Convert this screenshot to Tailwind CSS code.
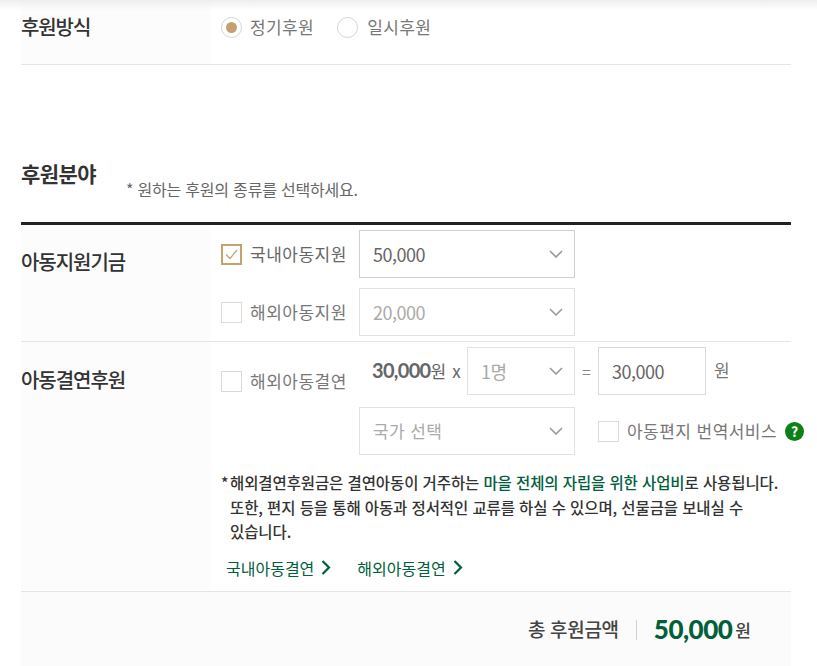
<!DOCTYPE html>
<html lang="ko">
<head>
  <meta charset="UTF-8"/>
  <title>후원분야</title>
  <script src="https://cdn.jsdelivr.net/npm/@tailwindcss/browser@4"></script>
</head>
<body class="bg-white text-[#333] h-[666px] overflow-hidden relative font-['Noto_Sans_CJK_KR','Noto_Sans',sans-serif]">

  <!-- top shadow -->
  <div class="absolute top-0 left-0 right-0 h-[10px] bg-gradient-to-b from-[#eeeeee] to-white/0"></div>

  <div class="w-[770px] ml-[21px]">

    <!-- 후원방식 -->
    <div class="flex h-[65px] border-b border-[#e5e5e5]">
      <div class="w-[189px] shrink-0 bg-[#fcfcfc] pt-[12px] text-[20px] leading-[30px] font-medium tracking-[-1.1px] text-[#333]">후원방식</div>
      <div class="flex items-start pt-[17px] pl-[11px] text-[17px] leading-[19px] tracking-[0.4px] text-[#777]">
        <span class="w-[21px] h-[21px] rounded-full border border-[#d5d5d5] flex items-center justify-center">
          <span class="w-[11px] h-[11px] rounded-full bg-[#c4a26f]"></span>
        </span>
        <span class="ml-[8px]">정기후원</span>
        <span class="w-[21px] h-[21px] rounded-full border border-[#d5d5d5] ml-[23px]"></span>
        <span class="ml-[9px]">일시후원</span>
      </div>
    </div>

    <!-- 후원분야 -->
    <div class="flex h-[160px] border-b-[3px] border-[#222]">
      <h2 class="mt-[92px] text-[21px] leading-[32px] font-bold tracking-[-0.6px] text-[#333]">후원분야</h2>
      <p class="ml-[30px] mt-[113px] text-[16px] leading-[22px] tracking-[-0.2px] text-[#666]">* 원하는 후원의 종류를 선택하세요.</p>
    </div>

    <!-- 아동지원기금 -->
    <div class="flex h-[117px] border-b border-[#e5e5e5]">
      <div class="w-[189px] shrink-0 bg-[#fcfcfc] pt-[22px] text-[20px] leading-[30px] font-medium tracking-[-1.05px] text-[#333]">아동지원기금</div>
      <div class="pt-[5px] pl-[11px] flex flex-col gap-[10px]">
        <div class="flex items-center">
          <span class="w-[21px] h-[21px] border-2 border-[#c4a26f] flex items-center justify-center">
            <svg width="13" height="11" viewBox="0 0 13 11" fill="none" stroke="#c4a26f" stroke-width="1.2"><path d="M1 5.5 L5 9.5 L12 1"/></svg>
          </span>
          <span class="w-[117px] pl-[8px] text-[17px] tracking-[0.5px] text-[#666] whitespace-nowrap">국내아동지원</span>
          <div class="w-[216px] h-[48px] border border-[#d0d0d0] bg-white flex items-center justify-between pl-[13px] pr-[11px] text-[18px] tracking-[-0.5px] text-[#666]">
            <span>50,000</span>
            <svg width="14" height="8" viewBox="0 0 14 8" fill="none" stroke="#999" stroke-width="1.6"><path d="M1 1 L7 7 L13 1"/></svg>
          </div>
        </div>
        <div class="flex items-center">
          <span class="w-[21px] h-[21px] border border-[#d9d9d9] bg-white"></span>
          <span class="w-[117px] pl-[8px] text-[17px] tracking-[0.5px] text-[#777] whitespace-nowrap">해외아동지원</span>
          <div class="w-[216px] h-[48px] border border-[#e2e2e2] bg-white flex items-center justify-between pl-[13px] pr-[11px] text-[18px] tracking-[-0.5px] text-[#aaa]">
            <span>20,000</span>
            <svg width="14" height="8" viewBox="0 0 14 8" fill="none" stroke="#999" stroke-width="1.6"><path d="M1 1 L7 7 L13 1"/></svg>
          </div>
        </div>
      </div>
    </div>

    <!-- 아동결연후원 -->
    <div class="flex h-[250px] border-b border-[#e5e5e5]">
      <div class="w-[189px] shrink-0 bg-[#fcfcfc] pt-[23px] text-[20px] leading-[30px] font-medium tracking-[-1.05px] text-[#333]">아동결연후원</div>
      <div class="pt-[5px] pl-[11px]">
        <div class="flex">
          <div class="w-[138px] shrink-0 flex items-start pt-[24px]">
            <span class="w-[21px] h-[21px] border border-[#d9d9d9] bg-white"></span>
            <span class="pl-[8px] text-[17px] leading-[19px] tracking-[0.5px] text-[#777] whitespace-nowrap">해외아동결연</span>
          </div>
          <div class="flex flex-col gap-[12px]">
            <div class="flex items-center h-[48px] text-[#666]">
              <span class="w-[108px] shrink-0 pl-[13px] whitespace-nowrap text-[17px] -mt-[2px]"><b class="font-['Lato'] font-bold text-[20px] tracking-[-0.7px]">30,000</b>원<span class="ml-[6px]">x</span></span>
              <div class="w-[108px] h-[48px] border border-[#e2e2e2] bg-white flex items-center justify-between pl-[13px] pr-[11px] text-[18px] tracking-[-0.5px] text-[#aaa]">
                <span>1명</span>
                <svg width="14" height="8" viewBox="0 0 14 8" fill="none" stroke="#999" stroke-width="1.6"><path d="M1 1 L7 7 L13 1"/></svg>
              </div>
              <span class="w-[23px] text-center text-[16px] text-[#888]">=</span>
              <div class="w-[108px] h-[48px] border border-[#d9d9d9] bg-white flex items-center pl-[13px] text-[18px] tracking-[-0.5px] text-[#666]">30,000</div>
              <span class="ml-[8px] text-[17px] text-[#777] -mt-[3px]">원</span>
            </div>
            <div class="flex items-center h-[48px]">
              <div class="w-[216px] h-[48px] border border-[#e2e2e2] bg-white flex items-center justify-between pl-[13px] pr-[11px] text-[17px] tracking-[0.4px] text-[#aaa]">
                <span>국가 선택</span>
                <svg width="14" height="8" viewBox="0 0 14 8" fill="none" stroke="#999" stroke-width="1.6"><path d="M1 1 L7 7 L13 1"/></svg>
              </div>
              <span class="ml-[23px] w-[21px] h-[21px] border border-[#d9d9d9] bg-white shrink-0"></span>
              <span class="ml-[8px] text-[17px] tracking-[0.45px] text-[#777] whitespace-nowrap">아동편지 번역서비스</span>
              <span class="ml-[8px] w-[19px] h-[19px] shrink-0 rounded-full bg-[#0e8018] text-white text-[14px] leading-[19px] font-bold text-center">?</span>
            </div>
          </div>
        </div>
        <div class="mt-[15px] relative pl-[9px] w-[570px] text-[15.5px] leading-[24.5px] font-medium tracking-[-0.1px] text-[#333]">
          <span class="absolute left-0 top-0">*</span>
          해외결연후원금은 결연아동이 거주하는 <span class="text-[#00603a]">마을 전체의 자립을 위한 사업비</span>로 사용됩니다.<br/>
          또한, 편지 등을 통해 아동과 정서적인 교류를 하실 수 있으며, 선물금을 보내실 수<br/>
          있습니다.
        </div>
        <div class="mt-[12px] pl-[5px] flex items-center text-[16px] leading-[24px] text-[#00603a]">
          <span>국내아동결연</span>
          <svg class="ml-[7px]" width="10" height="15" viewBox="0 0 10 15" fill="none" stroke="#00603a" stroke-width="2.2"><path d="M1.5 1 L8 7.5 L1.5 14"/></svg>
          <span class="ml-[26px]">해외아동결연</span>
          <svg class="ml-[7px]" width="10" height="15" viewBox="0 0 10 15" fill="none" stroke="#00603a" stroke-width="2.2"><path d="M1.5 1 L8 7.5 L1.5 14"/></svg>
        </div>
      </div>
    </div>

    <!-- 총 후원금액 -->
    <div class="h-[75px] bg-[#fbfbfb] flex items-center justify-end pr-[40px]">
      <span class="text-[19px] font-medium tracking-[-0.3px] text-[#444]">총 후원금액</span>
      <span class="w-px h-[20px] bg-[#cfcfcf] mx-[17px]"></span>
      <b class="font-['Lato'] text-[26px] font-black tracking-[-0.5px] text-[#00603a]">50,000</b>
      <span class="ml-[3px] text-[17px] font-medium text-[#444]">원</span>
    </div>

  </div>

</body>
</html>
